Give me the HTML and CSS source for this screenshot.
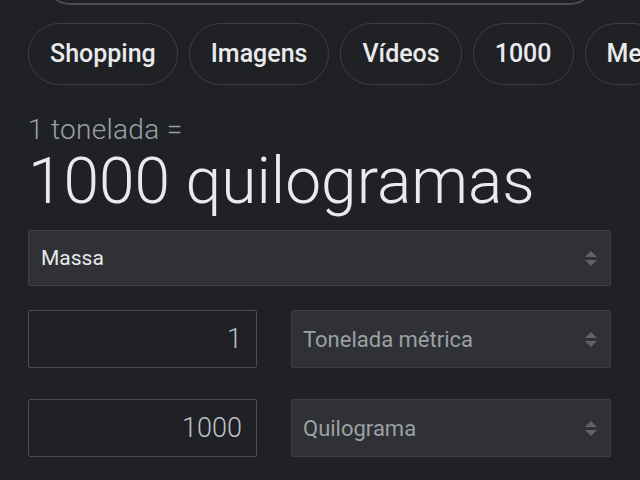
FILE: index.html
```html
<!DOCTYPE html>
<html lang="pt">

<head>
  <meta charset="UTF-8" />
  <title>Conversor de unidades</title>
  <link rel="stylesheet" href="styles.css">
</head>

<body>
  <div class="search-edge"></div>

  <div class="chips">
    <div class="chip">Shopping</div>
    <div class="chip">Imagens</div>
    <div class="chip">Vídeos</div>
    <div class="chip">1000</div>
    <div class="chip">Me</div>
  </div>

  <div class="converter">
    <div class="from-label">1 tonelada =</div>
    <div class="result">1000 quilogramas</div>

    <div class="select select-main">
      <span>Massa</span>
      <span class="arrows"></span>
    </div>

    <div class="unit-row">
      <div class="num-input">1</div>
      <div class="select">
        <span>Tonelada métrica</span>
        <span class="arrows"></span>
      </div>
    </div>

    <div class="unit-row">
      <div class="num-input">1000</div>
      <div class="select">
        <span>Quilograma</span>
        <span class="arrows"></span>
      </div>
    </div>
  </div>
</body>

</html>
```

FILE: styles.css
```css
body {
  margin: 0;
  background-color: #202124;
  color: #e8eaed;
  font-family: Roboto, "Liberation Sans", sans-serif;
  overflow: hidden;
}

.search-edge {
  height: 40px;
  margin: -37px 46px 0 46px;
  border-bottom: 2px solid #4a4d51;
  border-radius: 0 0 24px 24px;
}

.chips {
  display: flex;
  gap: 11px;
  margin-top: 18px;
  padding-left: 28px;
  white-space: nowrap;
  overflow: hidden;
}

.chip {
  flex-shrink: 0;
  height: 60px;
  line-height: 60px;
  padding: 0 21px;
  border: 1px solid #3c4043;
  border-radius: 31px;
  font-size: 25px;
  font-weight: 500;
  color: #e8eaed;
}

.converter {
  padding: 0 29px 0 28px;
}

.from-label {
  margin-top: 30px;
  font-size: 28px;
  font-weight: 300;
  line-height: 30px;
  letter-spacing: 0.3px;
  color: #9aa0a6;
}

.result {
  font-size: 64px;
  font-weight: 300;
  line-height: 74px;
  color: #e8eaed;
}

.select {
  display: flex;
  align-items: center;
  justify-content: space-between;
  box-sizing: border-box;
  height: 58px;
  padding: 0 13px 0 11px;
  background-color: #303134;
  border: 1px solid #3c4043;
  border-radius: 2px;
  font-size: 22px;
  color: #9aa0a6;
}

.select-main {
  height: 56px;
  margin-top: 11px;
  padding-left: 12px;
  font-size: 21px;
  color: #e8eaed;
}

.arrows {
  display: flex;
  flex-direction: column;
  gap: 3px;
}

.arrows::before,
.arrows::after {
  content: "";
  width: 0;
  height: 0;
  border-left: 6px solid transparent;
  border-right: 6px solid transparent;
}

.arrows::before {
  border-bottom: 6px solid #5f6368;
}

.arrows::after {
  border-top: 6px solid #5f6368;
}

.unit-row {
  display: grid;
  grid-template-columns: 229px 1fr;
  gap: 34px;
  margin-top: 24px;
}

.unit-row + .unit-row {
  margin-top: 31px;
}

.num-input {
  box-sizing: border-box;
  height: 58px;
  line-height: 56px;
  padding-right: 14px;
  border: 1px solid #4a4d51;
  border-radius: 2px;
  text-align: right;
  font-size: 27px;
  font-weight: 300;
  color: #bdc1c6;
}
```
